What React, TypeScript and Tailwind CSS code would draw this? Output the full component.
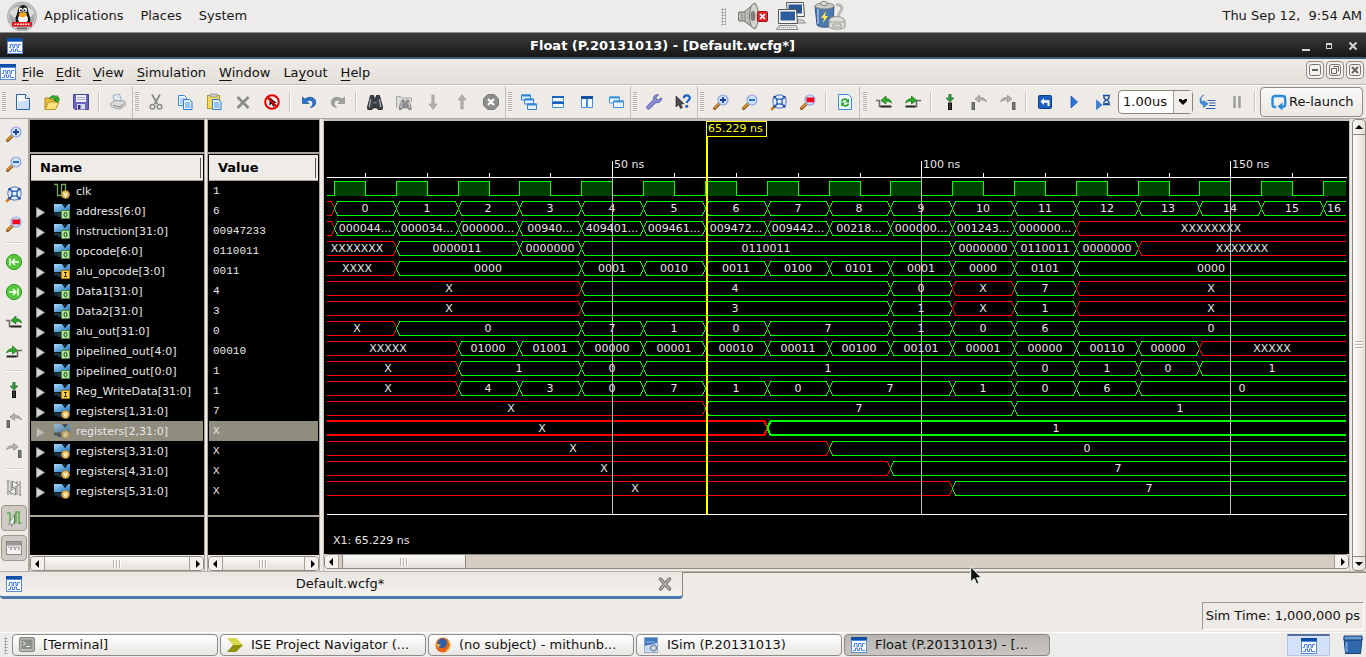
import React from "react";

/* ------------------------------------------------------------------ */
/* Icons                                                               */
/* ------------------------------------------------------------------ */

function Lens({ children }: { children?: React.ReactNode }) {
  return (
    <>
      <path d="M6.6 9.4 1.6 14.4" stroke="#8a4a0c" strokeWidth="3.2" strokeLinecap="round" />
      <path d="M6 9.6 1.6 14" stroke="#e39a3c" strokeWidth="1.6" strokeLinecap="round" />
      <circle cx="10" cy="6" r="5" fill="#cfe0fb" stroke="#8fa6dc" strokeWidth="1.2" />
      {children}
    </>
  );
}

const waves = (
  <>
    <rect x="0.5" y="0.5" width="15" height="15" fill="#fafcff" stroke="#5b8bd0" />
    <rect x="0" y="0" width="16" height="3" fill="#0f4fa8" />
    <path d="M0 3.500h16" stroke="#4d8ad8" />
    <path
      d="M2 9.500h1.500v-3h2.500v3h1.500v-3h2.500v3h1.500v-3h2.500M2 13.500h2.500v-2.500h2v2.500h2v-2.500h2v2.500h3.500"
      fill="none"
      stroke="#4a80e8"
      strokeWidth="1"
    />
  </>
);

const ICONS: Record<string, React.ReactNode> = {
  waves,
  new: (
    <>
      <path d="M1.500 0.500h9l4 4v11h-13z" fill="#f3f8ff" stroke="#2f5fa8" />
      <path d="M3 8 14 6v9H3z" fill="#c9def8" />
      <path d="M10.500 0.500v4h4" fill="#fff" stroke="#2f5fa8" />
    </>
  ),
  open: (
    <>
      <path d="M1 15V4h4l1.500 1.500H12V8" fill="#e8bf3a" stroke="#b48a1a" />
      <path d="M1 15.500 4.500 8H15l-3.500 7.500z" fill="#fbe27a" stroke="#b9921f" />
      <path d="M5.500 4.500C7 1 11 .8 13 3.500V1.500l2.500 3.800-2 3L10 6.300h1.800C10.500 3.800 8 3.300 5.500 4.500z" fill="#2eb52a" stroke="#14700f" strokeWidth=".7" />
    </>
  ),
  save: (
    <>
      <path d="M.5.5h15v15H2l-1.500-1.500z" fill="#6a63c0" stroke="#4a4498" />
      <rect x="3" y="1" width="10" height="7" fill="#eef0fb" />
      <path d="M4 3.500h8M4 5.500h8" stroke="#a9a9cf" />
      <rect x="4" y="10" width="8" height="5.500" fill="#d8d8ea" />
      <rect x="5" y="11" width="2.500" height="4" fill="#2f2a78" />
    </>
  ),
  print: (
    <>
      <path d="M3 1.500 9.500 0l2 7-7 2z" fill="#dce7f5" stroke="#9fb0c8" />
      <path d="M.500 9.500 5 6.500l9.500.500 1 4-5.500 4-8.500-2z" fill="#dcdcdc" stroke="#a3a3a3" />
      <path d="M3 11.500l7 1 4-3" fill="none" stroke="#8e8e8e" />
      <path d="M6 15l8-3" stroke="#b9b9b9" strokeWidth="1.500" />
    </>
  ),
  cut: (
    <g fill="none" stroke="#8b8b8b">
      <path d="M4 .5 9.500 10M12 .5 6.500 10" strokeWidth="1.800" />
      <circle cx="4.500" cy="12.700" r="2.300" strokeWidth="1.500" />
      <circle cx="11.500" cy="12.700" r="2.300" strokeWidth="1.500" />
    </g>
  ),
  copy: (
    <>
      <path d="M1.500 1.500h6l2 2v8h-8z" fill="#e8f3ff" stroke="#3a8ad6" />
      <path d="M3 5h5M3 7h5M3 9h3" stroke="#79b4ea" />
      <path d="M6.500 5.500h6l2.500 2.500v7.500H6.500z" fill="#e2f0ff" stroke="#2b7fd0" />
      <path d="M8 9h5M8 11h5.500M8 13h5.500" stroke="#4a98e0" />
    </>
  ),
  paste: (
    <>
      <rect x="1.500" y="1.500" width="12" height="13" fill="#f3d95e" stroke="#b59722" />
      <rect x="4" y="0" width="7" height="3" fill="#c9c9c9" stroke="#8b8b8b" strokeWidth=".6" />
      <path d="M6.500 5.500h6l2.500 2.500v7.500H6.500z" fill="#e2f0ff" stroke="#2b7fd0" />
      <path d="M8 9h5M8 11h5.500M8 13h5.500" stroke="#4a98e0" />
    </>
  ),
  delete: <path d="M2.500 3 13.500 14M13.500 3 2.500 14" stroke="#8c8c8c" strokeWidth="2.800" />,
  nocursor: (
    <>
      <circle cx="8" cy="8" r="6.800" fill="#f4eaea" stroke="#e60000" strokeWidth="2" />
      <path d="M5.500 3v8.500l2.200-1.800 1.500 3 1.800-.8-1.500-2.900h3z" fill="#111" />
      <path d="M3.200 3.200 12.800 12.800" stroke="#e60000" strokeWidth="2" />
    </>
  ),
  undo: <path d="M1.500 3v6.500H8L5.800 7.300C8.500 5 12 6.500 11.800 9.500c0 1.500-1 3-2.500 4 4-.5 5.700-3 5.400-5.800C14.200 3.500 8.500 1.500 4 5.200z" fill="#2a72c8" stroke="#154c94" strokeWidth=".7" />,
  redo: <path d="M14.500 3v6.500H8l2.200-2.200C7.500 5 4 6.500 4.200 9.500c0 1.500 1 3 2.500 4-4-.5-5.700-3-5.400-5.800C1.800 3.500 7.500 1.500 12 5.200z" fill="#a0a0a0" stroke="#8a8a8a" strokeWidth=".7" />,
  find: (
    <>
      <path d="M3.500 1.500h3l1 3v9.500h-1.500L5 15.500H.800L.5 13zM12.500 1.500h-3l-1 3v9.500h1.500l1 1.500h4.200l.300-2.500z" fill="#3b4146" stroke="#16191c" strokeWidth=".8" />
      <path d="M3.500 5 2.300 13M12.500 5l1.200 8" stroke="#a9b1b8" strokeWidth="1.300" />
      <path d="M6.500 7.500h3v2h-3z" fill="#6d757c" />
    </>
  ),
  findfiles: (
    <>
      <path d="M.5 14V2.500h4L6 4h9.500v4" fill="#dedcd9" stroke="#a5a5a5" />
      <path d="M6 6h2l.8 3V14H6l-.500 1.500H3L3.500 12zM12.500 6h-2l-.8 3V14h2.500l.5 1.500H15.300L14.800 12z" fill="#8f8f8f" stroke="#6f6f6f" strokeWidth=".6" />
      <path d="M5.800 8 4.800 14M12.700 8l1 6" stroke="#d6d6d6" />
    </>
  ),
  down: <path d="M6.800 1h2.400v9H12l-4 5.500L4 10h2.800z" fill="#b3b0ac" stroke="#9b9894" strokeWidth=".6" />,
  up: <path d="M6.800 15h2.400V6H12L8 .5 4 6h2.800z" fill="#b3b0ac" stroke="#9b9894" strokeWidth=".6" />,
  stop: (
    <>
      <path d="M4.800.5h6.400l4.300 4.300v6.400l-4.300 4.300H4.800L.5 11.200V4.800z" fill="#8d8d8d" stroke="#777" />
      <path d="M5 5l6 6M11 5l-6 6" stroke="#fff" strokeWidth="2.200" />
    </>
  ),
  cascade: (
    <g fill="#e6f3ff" stroke="#2f86d6">
      <path d="M.5 1h9v5h-9z" /><path d="M.5 1.500h9" strokeWidth="2" />
      <path d="M3.500 5h9v5h-9z" /><path d="M3.500 5.500h9" strokeWidth="2" />
      <path d="M6.500 10h9v5.500h-9z" /><path d="M6.500 10.500h9" strokeWidth="2" />
    </g>
  ),
  tileh: (
    <g fill="#f4faff" stroke="#3f92dc">
      <path d="M2.500 2.500h11v5h-11zM2.500 8.500h11v5h-11z" />
      <path d="M2 3h12M2 9h12" stroke="#1c62b8" strokeWidth="2" />
    </g>
  ),
  tilev: (
    <g fill="#f4faff" stroke="#3f92dc">
      <path d="M2.500 2.500h5v11h-5zM8.500 2.500h5v11h-5z" />
      <path d="M2 3.500h12" stroke="#1450a8" strokeWidth="3" />
    </g>
  ),
  float: (
    <g fill="#eaf5ff" stroke="#3f92dc">
      <path d="M1.500 3h10v6h-10z" /><path d="M1.500 3.500h10" strokeWidth="2" />
      <path d="M5.500 7h10v6.500h-10z" /><path d="M5.500 7.500h10" strokeWidth="2" />
    </g>
  ),
  wrench: (
    <path d="M15.300 3.800 12.500 6l-2-.6-.5-2L12.500.8C9.500 0 6.800 2.500 7.500 5.800L1 12.300c-1.300 1.500 1 3.800 2.500 2.500L10 8.500c3.300.8 6-1.700 5.300-4.700z" fill="#8a8cd8" stroke="#4c4f9e" strokeWidth=".9" />
  ),
  whatsthis: (
    <>
      <path d="M1 2v11l2.700-2.300L5.500 14.500l2-1L5.700 9.800h3.500z" fill="#4a4a4a" stroke="#222" strokeWidth=".6" />
      <path d="M8.800 4.200C9 .5 14.800.5 14.800 4c0 2.500-3 2.500-3 5" fill="none" stroke="#1461c4" strokeWidth="2.200" />
      <circle cx="11.800" cy="12.300" r="1.500" fill="#1461c4" />
    </>
  ),
  zoomin: <Lens><path d="M10 3v6M7 6h6" stroke="#1c3f9c" strokeWidth="1.800" /></Lens>,
  zoomout: <Lens><path d="M7 6h6" stroke="#1c63b8" strokeWidth="1.800" /></Lens>,
  zoomfit: (
    <>
      <path d="M4.500 11.500 1 15" stroke="#d58327" strokeWidth="3" strokeLinecap="round" />
      <circle cx="8.500" cy="7.500" r="6.700" fill="#e3edfc" stroke="#6c8ad2" strokeWidth="1.200" />
      <path d="M3 2.500 14 13M14 2.500 3 13" stroke="#2a5db0" strokeWidth="1.700" />
      <rect x="6" y="5.200" width="5" height="4.800" fill="#e8f1ff" stroke="#2a5db0" strokeWidth="1.300" />
      <path d="M2.500 2h3l-3 3zM14.500 2h-3l3 3zM2.500 13.500h3l-3-3zM14.500 13.500h-3l3-3z" fill="#1e4a9a" />
    </>
  ),
  zoomsel: <Lens><rect x="6.500" y="3.500" width="7.500" height="4.800" fill="#f5001d" /></Lens>,
  refresh: (
    <>
      <path d="M1.500.5h10l3 3v12h-13z" fill="#eef6ff" stroke="#3a8ad6" />
      <path d="M4.500 7.500C5.500 4.500 9 4.500 10.500 6.500M11.500 9.500c-1 3-4.500 3-6 1" fill="none" stroke="#27a527" strokeWidth="1.800" />
      <path d="M12 4.500v4H8zM4 12.500v-4h4z" fill="#27a527" />
    </>
  ),
  prevedge: (
    <>
      <path d="M0 6.500h3.500v6H15" fill="none" stroke="#6b6b66" strokeWidth="1.600" />
      <path d="M4.500 12.500h11" stroke="#1f1f1f" strokeWidth="1.800" />
      <path d="M5 6.500 10 2v2.700c3 0 5 1 5.500 4.300-1.700-1.700-3.200-1.800-5.500-1.800V10z" fill="#2faa2c" stroke="#126b10" strokeWidth=".7" />
    </>
  ),
  nextedge: (
    <>
      <path d="M1 12.500h10.500v-6H16" fill="none" stroke="#6b6b66" strokeWidth="1.600" />
      <path d="M.5 12.500h10" stroke="#1f1f1f" strokeWidth="1.800" />
      <path d="M11.500 6.500 6.500 2v2.700C3.500 4.700 1.500 5.700.5 9c1.700-1.700 3.700-1.800 6-1.800V10z" fill="#2faa2c" stroke="#126b10" strokeWidth=".7" />
    </>
  ),
  addmarker: (
    <>
      <path d="M6.800.5h2.400V4H12L8 8 4 4h2.800z" fill="#2f9a3e" stroke="#156424" strokeWidth=".6" />
      <rect x="6.500" y="9" width="3" height="6.500" fill="#3c3c3c" stroke="#111" />
    </>
  ),
  prevmarker: (
    <>
      <path d="M4 5 8.500 1.200v2.300c3.500 0 6 1 7 4.300-2-1.800-4.200-2-7-2v2.500z" fill="#b4b2af" stroke="#8a8885" strokeWidth=".7" />
      <rect x="1" y="8.500" width="2.500" height="7" fill="#777" stroke="#606060" />
    </>
  ),
  nextmarker: (
    <>
      <path d="M12 5 7.500 1.200v2.300c-3.500 0-6 1-7 4.300 2-1.800 4.200-2 7-2v2.500z" fill="#b4b2af" stroke="#8a8885" strokeWidth=".7" />
      <rect x="12.500" y="8.500" width="2.500" height="7" fill="#777" stroke="#606060" />
    </>
  ),
  restart: (
    <>
      <rect x="1.500" y="1.500" width="13" height="13" rx="1" fill="#1c5fc0" stroke="#0f3f8c" />
      <path d="M3.500 7.500 7 4v2.300h5.500V12h-2V8.700H7V11z" fill="#fff" />
    </>
  ),
  run: <path d="M5 2 11.500 8 5 14z" fill="#2d74d2" stroke="#1e59b0" strokeWidth=".8" />,
  runtime: (
    <>
      <path d="M1.500 6 7 11 1.500 15.500z" fill="#3d82d8" stroke="#2a66b8" strokeWidth=".6" />
      <path d="M8 1.500h7M8 10.500h7M9 2v2l2 2-2 2v2.500M14 2v2l-2 2 2 2v2.500" fill="none" stroke="#16509c" strokeWidth="1.400" />
      <path d="M10 9.500h3" stroke="#16509c" />
    </>
  ),
  step: (
    <>
      <path d="M4 1C0 3 0 7 3.500 8.500V6.500L8 9.800 3.500 13.500v-2.300C-1.500 9.500-1 3 4 1z" fill="#3f8fe0" stroke="#1f62b0" strokeWidth=".6" />
      <path d="M7.500 6.500h8M9 9h6.500M9 11.500h6.500M6 14.500h9.500" stroke="#2762b4" strokeWidth="1.200" />
    </>
  ),
  pause: <path d="M5.500 2v12M10.500 2v12" stroke="#9b9b9b" strokeWidth="2.400" />,
  relaunch: (
    <>
      <path d="M5 13H4c-2 0-2.500-1-2.500-2.500V5c0-1.800 1-3 2.500-3h7.500c1.800 0 2.700 1.200 2.700 3v5c0 1.500-1 2.700-2.700 2.700H10" fill="none" stroke="#2a8bdc" strokeWidth="2.400" />
      <path d="M11.500 8.500v8L6.500 12.600z" fill="#2a8bdc" />
    </>
  ),
  gofirst: (
    <>
      <circle cx="8" cy="8" r="7.600" fill="#55c83c" stroke="#2c9a1c" />
      <path d="M4 4.500v7M13 8H6.500M9 5 6 8l3 3" fill="none" stroke="#fff" strokeWidth="1.500" />
    </>
  ),
  golast: (
    <>
      <circle cx="8" cy="8" r="7.600" fill="#55c83c" stroke="#2c9a1c" />
      <path d="M12 4.500v7M3 8h6.500M7 5l3 3-3 3" fill="none" stroke="#fff" strokeWidth="1.500" />
    </>
  ),
  swap: (
    <g stroke="#8d8b88">
      <path d="M2 1v14M5 1v14M11 1v14M14 1v14M.5 1h3M12.500 15h3" strokeWidth="1.200" />
      <path d="M6.500 1 13 5 6.500 8zM9.500 8v7L3 11.500z" fill="#f4f2ef" />
    </g>
  ),
  snap: (
    <>
      <path d="M1 3h3v10M10 13V2h3v11h2.500" fill="none" stroke="#5aa84e" strokeWidth="1.500" />
      <path d="M8.500 5 2.500 14.500l2.800-1 .2 3 3-6z" fill="#fff" stroke="#777" strokeWidth=".7" />
      <path d="M8.500 4v10" stroke="#4f7a4a" />
    </>
  ),
  panels: (
    <>
      <rect x=".5" y="1.500" width="15" height="13" fill="#f4f3f1" stroke="#8c8a87" />
      <rect x="1" y="2" width="14" height="3.500" fill="#9b9996" />
      <path d="M2 7h3v3M6 7h3v3M10 7h3v3M5 7v3M9 7v3M13 7v3" fill="none" stroke="#9b9996" />
    </>
  ),
  terminal: (
    <>
      <rect x=".5" y=".5" width="15" height="14" rx="1.500" fill="#b9bab6" stroke="#83857f" />
      <rect x="2.500" y="2.500" width="11" height="9.500" fill="#8b8f89" />
      <path d="M4 4.500 6.500 6.500 4 8.500M7 9.500h4" fill="none" stroke="#f2f4f0" />
    </>
  ),
  navigator: (
    <>
      <path d="M0 1h9l7 7H6z" fill="#d5d94c" />
      <path d="M6 8h10l-7 7H0z" fill="#8d9008" />
    </>
  ),
  firefox: (
    <>
      <circle cx="8" cy="8" r="7.500" fill="#e8731a" />
      <circle cx="7.500" cy="6.500" r="5" fill="#2d5fa8" />
      <path d="M1 4C1 13 8 12.500 11 9c1.500-2 1-4 .5-5.500 2 1.500 4 3 3.500 6C13.500 17 2 17 .800 9.500z" fill="#e5661a" />
      <path d="M1 5c1 3 3 2 5 3-1 1-2 2-4 1.500z" fill="#f9c23c" />
      <path d="M13.500 4C16 7 15.500 12 11 14" fill="none" stroke="#fbc73d" strokeWidth="1.200" />
    </>
  ),
  isim: (
    <>
      <rect x="1.500" y=".5" width="13" height="15" fill="#dbe8f8" stroke="#8da9cc" />
      <path d="M2 1h12v5L2 9z" fill="#3f78bd" />
      <path d="M3 5h9M3 11h5M3 13h4" stroke="#9dc0e8" />
      <circle cx="10.500" cy="11" r="3.200" fill="#b8c3cf" stroke="#66788c" />
      <circle cx="10.500" cy="11" r="1.100" fill="#f5f5f5" />
    </>
  ),
};

function Icon({ name }: { name: string }) {
  return (
    <svg viewBox="0 0 16 16" className="size-4 shrink-0 overflow-visible" fill="none" aria-hidden="true">
      {ICONS[name]}
    </svg>
  );
}

function BusIcon({ badge, dim }: { badge: string; dim?: boolean }) {
  return (
    <svg viewBox="0 0 16 16" className={dim ? "size-4 opacity-60" : "size-4"} fill="none" aria-hidden="true">
      <defs>
        <linearGradient id="busFill" x1="0" y1="0" x2="1" y2="1">
          <stop offset="0" stopColor="#a9dcff" />
          <stop offset="1" stopColor="#1b6db8" />
        </linearGradient>
      </defs>
      {badge === "clk" ? (
        <path d="M0 1.500h3.500v11H7.500V1.500h4V8" stroke="#76a862" strokeWidth="1.300" />
      ) : (
        <>
          <path d="M0 1h8l3 4 3-4h2v8H0z" fill="url(#busFill)" />
          <path d="M8 1h6l-3 4z" fill="#12222f" />
          <path d="M0 9.500h7l1.500 3L7 14H4l-1-1.500H0z" fill="#1d3440" />
        </>
      )}
      {badge === "O" && (
        <>
          <rect x="7.500" y="7.500" width="8" height="8" fill="#b4e8a0" stroke="#4b8a3a" />
          <ellipse cx="11.500" cy="11.500" rx="1.500" ry="2.200" stroke="#173d10" />
        </>
      )}
      {badge === "I" && (
        <>
          <rect x="7.500" y="7.500" width="8" height="8" fill="#ffcf4a" stroke="#a9780d" />
          <path d="M10 9.500h3M11.500 9.500v4M10 13.500h3" stroke="#3a2a00" />
        </>
      )}
      {(badge === "V" || badge === "clk") && (
        <>
          <circle cx="11.500" cy="11.500" r="4" fill="#f0b945" stroke="#8f7f52" />
          <path d="M9.800 9.500 11.500 13.500l1.700-4" stroke="#fff8e0" strokeWidth="1.200" />
        </>
      )}
    </svg>
  );
}

/* ------------------------------------------------------------------ */
/* Signals                                                             */
/* ------------------------------------------------------------------ */

type Signal = {
  name: string;
  value: string;
  badge: string;
  /* [edge index, label] pairs; START is before the first edge */
  wave: [number, string][];
  selected?: boolean;
};

const START = -1;

const each = (from: number, labels: string): [number, string][] =>
  labels.split(" ").map((l, i) => [from + i, l] as [number, string]);

const SIGNALS: Signal[] = [
  { name: "clk", value: "1", badge: "clk", wave: [] },
  { name: "address[6:0]", value: "6", badge: "O", wave: [[START, ""], ...each(0, "0 1 2 3 4 5 6 7 8 9 10 11 12 13 14 15 16")] },
  {
    name: "instruction[31:0]", value: "00947233", badge: "O",
    wave: [[START, ""], ...each(0, "000044... 000034... 000000... 00940... 409401... 009461... 009472... 009442... 00218... 000000... 001243... 000000... XXXXXXXX")],
  },
  { name: "opcode[6:0]", value: "0110011", badge: "O", wave: [[START, "XXXXXXX"], [1, "0000011"], [3, "0000000"], [4, "0110011"], ...each(10, "0000000 0110011 0000000 XXXXXXX")] },
  { name: "alu_opcode[3:0]", value: "0011", badge: "I", wave: [[START, "XXXX"], [1, "0000"], ...each(4, "0001 0010 0011 0100 0101 0001 0000 0101 0000")] },
  { name: "Data1[31:0]", value: "4", badge: "O", wave: [[START, "X"], [4, "4"], ...each(9, "0 X 7 X")] },
  { name: "Data2[31:0]", value: "3", badge: "O", wave: [[START, "X"], [4, "3"], ...each(9, "1 X 1 X")] },
  { name: "alu_out[31:0]", value: "0", badge: "O", wave: [[START, "X"], [1, "0"], ...each(4, "7 1 0 7"), ...each(9, "1 0 6 0")] },
  { name: "pipelined_out[4:0]", value: "00010", badge: "O", wave: [[START, "XXXXX"], ...each(2, "01000 01001 00000 00001 00010 00011 00100 00101 00001 00000 00110 00000 XXXXX")] },
  { name: "pipelined_out[0:0]", value: "1", badge: "O", wave: [[START, "X"], [2, "1"], ...each(4, "0 1"), ...each(11, "0 1 0 1")] },
  { name: "Reg_WriteData[31:0]", value: "1", badge: "I", wave: [[START, "X"], ...each(2, "4 3 0 7 1 0 7"), ...each(10, "1 0 6 0")] },
  { name: "registers[1,31:0]", value: "7", badge: "V", wave: [[START, "X"], [6, "7"], [11, "1"]] },
  { name: "registers[2,31:0]", value: "X", badge: "V", wave: [[START, "X"], [7, "1"]], selected: true },
  { name: "registers[3,31:0]", value: "X", badge: "V", wave: [[START, "X"], [8, "0"]] },
  { name: "registers[4,31:0]", value: "X", badge: "V", wave: [[START, "X"], [9, "7"]] },
  { name: "registers[5,31:0]", value: "X", badge: "V", wave: [[START, "X"], [10, "7"]] },
];

const LEFT = 3;
const RIGHT = 1022;
const rise = (k: number) => Math.floor(10.6 + 61.8 * k);
const fall = (k: number) => Math.floor(41.6 + 61.8 * k);
const range = (n: number) => Array.from({ length: n }, (_, i) => i);
const GREEN = "#00ff00";
const RED = "#ff0000";

function BusWave({ signal, top }: { signal: Signal; top: number }) {
  const y1 = signal.selected ? top : top + 0.5;
  const y2 = y1 + 14;
  const mid = y1 + 7;
  return (
    <g fill="none" strokeWidth={signal.selected ? 2 : 1}>
      {signal.wave.map(([start, label], i) => {
        const next = signal.wave[i + 1];
        const open = start === START;
        const a = open ? LEFT : rise(start) + 0.5;
        const b = next ? rise(next[0]) + 0.5 : RIGHT;
        const color = open || label.startsWith("X") ? RED : GREEN;
        const head = open ? `M${a} ${y1}` : `M${a} ${mid}L${a + 3} ${y1}`;
        const turn = next ? `H${b - 3}L${b} ${mid}L${b - 3} ${y2}` : `H${b}M${b} ${y2}`;
        const tail = open ? `H${a}` : `H${a + 3}L${a} ${mid}`;
        return <path key={start} d={head + turn + tail} stroke={color} />;
      })}
    </g>
  );
}

function WaveLabels({ signal, top }: { signal: Signal; top: number }) {
  return (
    <>
      {signal.wave.map(([start, label], i) => {
        const next = signal.wave[i + 1];
        const a = start === START ? -6 : rise(start);
        const b = next ? rise(next[0]) : RIGHT;
        return label ? (
          <text key={start} x={Math.floor((a + b) / 2)} y={top + 11} textAnchor="middle">
            {label}
          </text>
        ) : null;
      })}
    </>
  );
}

function WaveCanvas() {
  const clock =
    `M${LEFT} 74.5` +
    range(17)
      .map((k) => `H${rise(k) + 0.5}V60.5H${k === 16 ? RIGHT : fall(k) + 0.5}${k === 16 ? "" : "V74.5"}`)
      .join("");
  return (
    <svg width="1025" height="433" className="block shrink-0 text-[11px]" fill="#e6e6e6" role="img" aria-label="Waveforms">
      <g shapeRendering="crispEdges">
        {range(17).map((k) => (
          <rect key={k} x={rise(k)} y="60" width={(k === 16 ? RIGHT : fall(k)) - rise(k)} height="15" fill="#004000" />
        ))}
        <path d={clock} fill="none" stroke={GREEN} />
        {SIGNALS.slice(1).map((s, i) => (
          <BusWave key={s.name} signal={s} top={80 + 20 * i} />
        ))}
        <path d={`M${LEFT} 56.5H1023M${LEFT} 393.5H1023`} stroke="#fff" />
        <path d={range(16).filter((k) => k % 5 !== 4).map((k) => `M${fall(k) + 0.5} 52V56`).join("")} stroke="#fff" />
      </g>
      {SIGNALS.slice(1).map((s, i) => (
        <WaveLabels key={s.name} signal={s} top={80 + 20 * i} />
      ))}
      <g shapeRendering="crispEdges">
        <path d="M288.500 57V394M597.500 57V394M906.500 57V394" stroke="#c0c0c0" />
        <path d="M288.500 40V57M597.500 40V57M906.500 40V57" stroke="#fff" />
        <rect x="382" y="0" width="2" height="394" fill="#ffff00" />
        <rect x="382.500" y="0.500" width="60" height="15" fill="#000" stroke="#ffff00" />
      </g>
      <text x="384" y="11" fill="#ffff00">65.229 ns</text>
      <text x="290" y="47">50 ns</text>
      <text x="599" y="47">100 ns</text>
      <text x="908" y="47">150 ns</text>
      <text x="9" y="423">X1: 65.229 ns</text>
    </svg>
  );
}

/* ------------------------------------------------------------------ */
/* Small widgets                                                       */
/* ------------------------------------------------------------------ */

function ToolButton({ icon, label }: { icon: string; label: string }) {
  return (
    <button type="button" aria-label={label} className="flex h-8 w-[29px] shrink-0 items-center justify-center">
      <Icon name={icon} />
    </button>
  );
}

function ToolSeparator() {
  return (
    <div className="flex h-5 w-2 shrink-0 justify-center">
      <div className="h-full w-px bg-[#c9c5be]" />
      <div className="h-full w-px bg-white" />
    </div>
  );
}

function ToolGroup({ children, last }: { children: React.ReactNode; last?: boolean }) {
  return (
    <div className={last ? "flex h-full grow items-center" : "flex h-full shrink-0 items-center border-r border-[#c2bdb5]"}>
      <div className={last ? "flex w-[9px] shrink-0 justify-center" : "flex w-2 shrink-0 justify-center"}>
        <div className="h-5 w-1 bg-[repeating-linear-gradient(#b3aea6_0_1px,#f8f6f3_1px_2px)]" />
      </div>
      {children}
    </div>
  );
}

const isSep = (s: string) => s === "|";

function Tools({ items }: { items: string[] }) {
  return (
    <>
      {items.map((item, i) => {
        if (isSep(item)) return <ToolSeparator key={i} />;
        const [icon, label] = item.split("/");
        return <ToolButton key={i} icon={icon} label={label} />;
      })}
    </>
  );
}

function Arrow({ dir }: { dir: "left" | "right" | "up" | "down" }) {
  const d = { left: "M6 1v8L2 5z", right: "M4 1v8l4-4z", up: "M1 7h8L5 3z", down: "M1 3h8L5 7z" }[dir];
  return (
    <svg viewBox="0 0 10 10" className="size-[10px]" aria-hidden="true">
      <path d={d} fill="#000" />
    </svg>
  );
}

function Grip() {
  return <span className="h-2 w-[9px] bg-[repeating-linear-gradient(90deg,#b9b3aa_0_1px,#fff_1px_2px,transparent_2px_3px)]" />;
}

function HScroll({ label, thumb, start }: { label: string; thumb: string; start?: string }) {
  return (
    <div className="flex h-[15px] shrink-0 overflow-hidden rounded-sm border border-[#8d877e] bg-[#d6cdc3]" aria-label={label} role="group">
      <button type="button" aria-label="Scroll left" className="flex w-[14px] shrink-0 items-center justify-center border-r border-[#a39d94] bg-[#f3f0ed]">
        <Arrow dir="left" />
      </button>
      <div className={start}>
        <div className={thumb}>
          <Grip />
        </div>
      </div>
      <button type="button" aria-label="Scroll right" className="flex w-[14px] shrink-0 items-center justify-center border-l border-[#a39d94] bg-[#f3f0ed]">
        <Arrow dir="right" />
      </button>
    </div>
  );
}

const THUMB = "flex h-full w-full items-center justify-center bg-linear-to-b from-[#fbfaf8] to-[#e4dfd9]";

function ColumnPane({ title, name, children }: { title: string; name: string; children: React.ReactNode }) {
  return (
    <>
      <div className="h-8 bg-black" />
      <div className="h-[2px] bg-[#aca59c]" />
      <div className="bg-black px-px pt-px">
        <table className="w-full border-separate border-spacing-0 text-[11px] text-[#e8e8e8]" aria-label={name}>
          <thead>
            <tr>
              <th className="h-[26px] border-b border-[#a39d94] bg-[#efece8] py-0 pr-[2px] pl-[9px] text-left text-[13px] leading-5 font-bold text-black">
                <div className="border-r border-[#55524d]">{title}</div>
              </th>
            </tr>
          </thead>
          <tbody>{children}</tbody>
        </table>
      </div>
      <div className="h-[14px] grow bg-black" />
      <div className="h-[2px] bg-[#aca59c]" />
      <div className="h-[38px] bg-black" />
      <div className="h-px bg-[#efece8]" />
    </>
  );
}

const MENUS: [string, string, string, string][] = [
  ["", "F", "ile", "mr-[12px]"],
  ["", "E", "dit", "mr-[12px]"],
  ["", "V", "iew", "mr-[13px]"],
  ["", "S", "imulation", "mr-[13px]"],
  ["", "W", "indow", "mr-[13px]"],
  ["La", "y", "out", "mr-[13px]"],
  ["", "H", "elp", ""],
];

const SIDE = [
  "zoomin/Zoom In", "zoomout/Zoom Out", "zoomfit/Zoom to Full View", "zoomsel/Zoom to Cursor", "|",
  "gofirst/Go to Time 0", "golast/Go to Latest Time", "prevedge/Previous Transition", "nextedge/Next Transition", "|",
  "addmarker/Add Marker", "prevmarker/Previous Marker", "nextmarker/Next Marker", "|",
  "swap/Swap Cursors", "snap/Snap to Transition", "panels/Floating Ruler",
];

const TASKS: [string, string][] = [
  ["terminal", "[Terminal]"],
  ["navigator", "ISE Project Navigator (..."],
  ["firefox", "(no subject) - mithunb..."],
  ["isim", "ISim (P.20131013)"],
  ["waves", "Float (P.20131013) - [..."],
];

/* ------------------------------------------------------------------ */
/* Page sections                                                       */
/* ------------------------------------------------------------------ */

function DesktopPanel() {
  return (
    <header className="flex h-8 shrink-0 items-center bg-[#edecea] pl-[7px] pr-1 text-[#1a1a1a]">
      <svg viewBox="0 0 30 30" className="size-[30px]" aria-hidden="true">
        <circle cx="15" cy="15.500" r="14.500" fill="#c9c9c9" stroke="#a9a9a9" />
        <circle cx="15" cy="15.500" r="12.500" fill="#a7a8aa" />
        <path d="M3 12C6 3 24 3 27 12L24 16H6z" fill="#dcdcdc" />
        <path d="M9 21c-1-6 1-7 1.500-10C11 3 20 2 21 9c.300 4 3 7 2 12z" fill="#151515" />
        <ellipse cx="16" cy="18" rx="5" ry="5" fill="#f4f4f4" />
        <ellipse cx="13.700" cy="9" rx="2" ry="2.500" fill="#fff" />
        <ellipse cx="18" cy="9" rx="2" ry="2.500" fill="#fff" />
        <circle cx="14" cy="9.500" r=".9" />
        <circle cx="17.600" cy="9.500" r=".9" />
        <path d="M11.500 13.500c2-3 6-3 8.500-.5-1 4-7 5-8.500.5z" fill="#f6a51c" />
        <rect x="5" y="21" width="20" height="4.500" fill="#e3131b" />
        <path d="M7.500 23.300h15" stroke="#fff" strokeWidth="1.600" strokeDasharray="1.800 .9" />
        <path d="M10 27.500h10" stroke="#6c6c6c" strokeWidth="1.500" />
      </svg>
      <nav className="flex gap-[17px] pl-[7px]">
        <a href="#applications">Applications</a>
        <a href="#places">Places</a>
        <a href="#system">System</a>
      </nav>
      <div className="ml-[474px] flex items-center gap-2">
        <span className="mr-1 h-[17px] w-[5px] bg-[radial-gradient(#8f8f8f_35%,transparent_60%)] bg-size-[3px_3px]" />
        <svg viewBox="0 0 30 28" className="h-7 w-[30px]" aria-hidden="true">
          <path d="M1 10h5L17 1c3 4 3 22 0 26L6 19H1c-1-2-1-7 0-9z" fill="#bdbdb8" stroke="#6f6f6a" />
          <ellipse cx="16" cy="14" rx="4.500" ry="12.500" fill="#d4d4cf" stroke="#7a7a75" />
          <ellipse cx="15" cy="14" rx="2.500" ry="5" fill="#80807b" />
          <path d="M4 10v9M7 9v11" stroke="#8b8b86" />
          <rect x="19.500" y="9.500" width="10" height="10" rx="1" fill="#e0262c" stroke="#a30d12" />
          <path d="m22 12 5 5m0-5-5 5" stroke="#fff" strokeWidth="1.600" />
        </svg>
        <svg viewBox="0 0 30 28" className="h-7 w-[30px]" aria-hidden="true">
          <path d="M10.500.500h17l1 14h-17z" fill="#f2f2ef" stroke="#555" />
          <path d="M12.500 2.500H26v9H12.500z" fill="#2c5596" />
          <path d="M15 18h12l2.500 3H16z" fill="#ddd" stroke="#888" />
          <path d="M2.500 7.500h18l1 14h-19z" fill="#f2f2ef" stroke="#555" />
          <path d="M4.500 9.500H19v9H4.500z" fill="#2c5c9e" />
          <path d="M3 23.500h17l2 4H.500z" fill="#e6e6e2" stroke="#888" />
          <path d="M3 25.500h16" stroke="#9a9a96" strokeDasharray="1 1" />
        </svg>
        <svg viewBox="0 0 32 30" className="h-[30px] w-8" aria-hidden="true">
          <path d="M20 24c6 0 3-10 6-13 4-4 1-8-4-7" fill="none" stroke="#b9bab5" strokeWidth="3" />
          <path d="M1 5h19l-1 19c-4 3-13 3-16 0z" fill="#4c78ad" stroke="#35587f" />
          <ellipse cx="10.500" cy="5" rx="9.500" ry="3" fill="#c9cbc8" stroke="#84867f" />
          <rect x="7" y="0.500" width="6" height="4" rx="1.500" fill="#dcdcd9" stroke="#85857f" />
          <path d="M4 8v15" stroke="#89addb" strokeWidth="2" />
          <path d="m12 10-5 7h3l-1 5 5-7h-3z" fill="#fce94f" />
          <path d="M15 20c0-6 15-6 16 0v6c-3 3-12 3-16 0z" fill="#dededb" stroke="#8f908a" />
          <path d="M19 23h8v3h-8zM15 21h16" fill="none" stroke="#9d9e98" />
        </svg>
      </div>
      <time className="ml-auto whitespace-pre">Thu Sep 12,  9:54 AM</time>
    </header>
  );
}

function TitleBar() {
  return (
    <div className="flex h-[27px] shrink-0 items-center border-t border-b-2 border-t-[#8e8c89] border-b-[#3c5676] bg-linear-to-b from-[#3a3a3a] via-[#2b2b2b] to-[#161616] pt-[2px] pr-2 pl-[7px]">
      <Icon name="waves" />
      <h1 className="grow text-center font-bold text-white">Float (P.20131013) - [Default.wcfg*]</h1>
      <div className="flex items-center gap-4">
        <button type="button" aria-label="Minimize window" className="flex h-3 w-2 items-end"><span className="mb-px h-[2px] w-full bg-[#d6d6d6]" /></button>
        <button type="button" aria-label="Maximize window" className="h-[6px] w-[6px] border border-t-2 border-[#d6d6d6]" />
        <button type="button" aria-label="Close window" className="size-[10px]">
          <svg viewBox="0 0 10 10" aria-hidden="true"><path d="m1.500 1.500 7 7m0-7-7 7" stroke="#d6d6d6" strokeWidth="2" /></svg>
        </button>
      </div>
    </div>
  );
}

function MenuBar() {
  const mdi: [string, string][] = [
    ["Minimize document", "M6 9h6"],
    ["Restore document", "M7.500 5.500h5v5M5.500 7.500h5v5h-5z"],
    ["Close document", "m6 6 6 6m0-6-6 6"],
  ];
  return (
    <div className="flex h-[26px] shrink-0 items-center border-b border-[#c2beb6] bg-linear-to-b from-[#eeebe7] to-[#e3e0da] pr-[2px]">
      <Icon name="waves" />
      <nav className="flex grow pt-[2px] pl-[6px]">
        {MENUS.map(([pre, key, post, gap]) => (
          <a key={key} href={"#" + pre + key + post} className={gap}>
            {pre}<span className="underline underline-offset-[3px]">{key}</span>{post}
          </a>
        ))}
      </nav>
      <div className="flex gap-[2px] self-start pt-[2px]">
        {mdi.map(([label, d]) => (
          <button key={label} type="button" aria-label={label} className="size-[18px] rounded-sm border border-[#8f8a82] bg-[#f4f2ef]">
            <svg viewBox="1 1 16 16" className="size-4" fill="none" aria-hidden="true">
              <rect x="3.500" y="3.500" width="11" height="11" rx="2" stroke="#77736d" />
              <path d={d} stroke="#66625d" strokeWidth={label.startsWith("Restore") ? 1 : 2} />
            </svg>
          </button>
        ))}
      </div>
    </div>
  );
}

function ToolBar() {
  return (
    <div className="flex h-[34px] shrink-0 items-center overflow-hidden border-t border-b border-t-white border-b-[#aea9a0] bg-[#eeebe7]">
      <ToolGroup><Tools items={["new/New", "open/Open", "save/Save", "|", "print/Print"]} /></ToolGroup>
      <ToolGroup>
        <Tools items={["cut/Cut", "copy/Copy", "paste/Paste", "delete/Delete", "nocursor/Cancel", "|", "undo/Undo", "redo/Redo", "|", "find/Find", "findfiles/Find in Files", "down/Find Next", "up/Find Previous", "stop/Stop Search"]} />
      </ToolGroup>
      <ToolGroup><Tools items={["cascade/Cascade", "tileh/Tile Horizontally", "tilev/Tile Vertically", "float/Float"]} /></ToolGroup>
      <ToolGroup><Tools items={["wrench/Preferences", "whatsthis/What's This"]} /></ToolGroup>
      <ToolGroup><Tools items={["zoomin/Zoom In", "zoomout/Zoom Out", "zoomfit/Zoom to Full View", "zoomsel/Zoom to Cursor", "|", "refresh/Refresh"]} /></ToolGroup>
      <ToolGroup last>
        <Tools items={["prevedge/Previous Transition", "nextedge/Next Transition", "|", "addmarker/Add Marker", "prevmarker/Previous Marker", "nextmarker/Next Marker", "|", "restart/Restart", "run/Run All", "runtime/Run for Time"]} />
        <div className="relative ml-px h-6 w-[75px] shrink-0">
          <select aria-label="Run time" defaultValue="1.00us" className="size-full appearance-none rounded-sm border border-[#8a857c] bg-white pl-1 text-[13px]">
            <option>1.00us</option>
          </select>
          <span className="pointer-events-none absolute inset-y-px right-px flex w-[19px] items-center justify-center border-l border-[#a39d94] bg-[#f1eeea]">
            <svg viewBox="0 0 8 6" className="h-[6px] w-2" aria-hidden="true"><path d="M0 0h2l2 1.500L6 0h2v2L4 6 0 2z" /></svg>
          </span>
        </div>
        <Tools items={["step/Step", "pause/Break", "|"]} />
        <button type="button" className="ml-px flex h-[30px] w-[103px] shrink-0 items-center gap-[2px] rounded border border-[#8f8a82] bg-linear-to-b from-[#fbfaf8] to-[#ebe7e2] pl-[10px]">
          <Icon name="relaunch" />
          <span className="whitespace-nowrap">Re-launch</span>
        </button>
      </ToolGroup>
    </div>
  );
}

function SideBar() {
  return (
    <div className="flex w-7 shrink-0 flex-col">
      {SIDE.map((item, i) => {
        if (isSep(item))
          return (
            <div key={i} className="mx-[6px] flex h-2 flex-col justify-center">
              <div className="h-px bg-[#d4d0ca]" />
              <div className="h-px bg-white" />
            </div>
          );
        const [icon, label] = item.split("/");
        const pressed = i >= SIDE.length - 2;
        return (
          <div key={i} className="flex h-[30px] items-center justify-center">
            <button
              type="button"
              aria-label={label}
              className={pressed ? "flex size-[26px] items-center justify-center rounded-sm border border-[#9d978e] bg-[#cfcac3]" : "flex size-[26px] items-center justify-center"}
            >
              <Icon name={icon} />
            </button>
          </div>
        );
      })}
    </div>
  );
}

function Workspace() {
  return (
    <main className="flex shrink-0 bg-[#eeebe7]">
      <SideBar />
      <section className="flex w-[177px] shrink-0 flex-col border-t border-r border-l-2 border-[#aca59c]">
        <ColumnPane title="Name" name="Signal names">
          {SIGNALS.map((s) => (
            <tr key={s.name} className={s.selected ? "bg-[#908c7e]" : ""}>
              <td className="p-0">
                <div className="flex h-5 items-center pl-[5px]">
                  <span className="flex w-[18px]">
                    {s.badge !== "clk" && (
                      <svg viewBox="0 0 9 11" className={s.selected ? "mt-[3px] h-[11px] w-[9px] opacity-70" : "mt-[3px] h-[11px] w-[9px]"} aria-hidden="true">
                        <path d="M.5.5v10l8-5z" fill="#d4d4d4" stroke="#a0a0a0" strokeWidth=".8" />
                      </svg>
                    )}
                  </span>
                  <BusIcon badge={s.badge} dim={s.selected} />
                  <span className="pt-[2px] pl-[6px] whitespace-nowrap">{s.name}</span>
                </div>
              </td>
            </tr>
          ))}
        </ColumnPane>
        <HScroll label="Name scroll bar" start="grow" thumb={THUMB} />
      </section>
      <section className="ml-[2px] flex w-[113px] shrink-0 flex-col border-x border-t border-[#aca59c]">
        <ColumnPane title="Value" name="Signal values">
          {SIGNALS.map((s) => (
            <tr key={s.name} className={s.selected ? "bg-[#908c7e]" : ""}>
              <td className="h-5 py-0 pr-0 pl-1 font-['Liberation_Mono',monospace] leading-5">{s.value}</td>
            </tr>
          ))}
        </ColumnPane>
        <HScroll label="Value scroll bar" start="grow" thumb={THUMB} />
      </section>
      <section className="ml-[3px] flex min-w-0 grow flex-col border-x border-t-2 border-[#c6c1ba]">
        <div className="flex grow overflow-hidden bg-black">
          <WaveCanvas />
        </div>
        <HScroll label="Waveform scroll bar" start="grow pl-[3px]" thumb="flex h-full w-[124px] items-center justify-center border-x border-[#8d877e] bg-linear-to-b from-[#fbfaf8] to-[#e4dfd9]" />
        <div className="h-[2px] bg-[#eeebe7]" />
      </section>
      <div className="ml-[2px] flex w-[14px] shrink-0 flex-col overflow-hidden rounded-sm border border-[#8d877e] bg-linear-to-r from-[#fbfaf8] to-[#e4dfd9]">
        <button type="button" aria-label="Scroll up" className="flex h-[15px] items-center justify-center border-b border-[#8d877e]"><Arrow dir="up" /></button>
        <div className="flex grow items-center justify-center">
          <span className="h-[9px] w-2 bg-[repeating-linear-gradient(#b9b3aa_0_1px,#fff_1px_2px,transparent_2px_3px)]" />
        </div>
        <button type="button" aria-label="Scroll down" className="flex h-[14px] items-center justify-center border-t border-[#8d877e]"><Arrow dir="down" /></button>
      </div>
    </main>
  );
}

function DocumentTabs() {
  return (
    <div className="flex h-7 shrink-0 border-t border-[#b5b0a8] bg-[#eeebe7]">
      <div className="flex w-1/2 items-center rounded-b-sm border-r border-b-[3px] border-r-[#8d877e] border-b-[#4a7aab] bg-linear-to-b from-[#e9e5e1] to-[#f4f1ee] pr-[10px] pl-[6px]">
        <Icon name="waves" />
        <button type="button" className="grow text-center">Default.wcfg*</button>
        <button type="button" aria-label="Close tab" className="size-[14px]">
          <svg viewBox="0 0 14 14" fill="none" aria-hidden="true">
            <path d="m2.500 2 9 10m0-10-9 10" stroke="#73736b" strokeWidth="3.400" strokeLinecap="round" />
            <path d="m2.500 2 9 10m0-10-9 10" stroke="#b4b5a9" strokeWidth="1.400" strokeLinecap="round" />
          </svg>
        </button>
      </div>
      <div className="grow border-t border-[#8d877e]" />
    </div>
  );
}

function TaskBar() {
  return (
    <footer className="flex h-[25px] shrink-0 items-center border-t border-white bg-[#edecea] pl-1 pr-[3px]">
      <span className="mr-1 h-[17px] w-1 bg-[radial-gradient(#8f8f8f_35%,transparent_60%)] bg-size-[3px_3px]" />
      <div className="flex min-w-0 grow gap-[2px] pr-4">
        {TASKS.map(([icon, title], i) => (
          <button
            key={title}
            type="button"
            className={
              i === TASKS.length - 1
                ? "flex h-[22px] w-[206px] min-w-0 items-center gap-2 rounded border border-[#8a8681] bg-linear-to-b from-[#b9b6b1] to-[#c9c6c1] px-[6px]"
                : "flex h-[22px] w-[206px] min-w-0 items-center gap-2 rounded border border-[#8f8c88] bg-linear-to-b from-white to-[#e8e6e3] px-[6px]"
            }
          >
            <Icon name={icon} />
            <span className="whitespace-nowrap">{title}</span>
          </button>
        ))}
      </div>
      <button type="button" aria-label="Workspace 1" className="flex h-[22px] w-[43px] items-center justify-center border border-t-2 border-[#b8c6dc] border-t-[#55719b] bg-[#d3e2f8]">
        <Icon name="waves" />
      </button>
      <button type="button" aria-label="Trash" className="ml-[13px] h-5 w-5">
        <svg viewBox="0 0 20 20" aria-hidden="true">
          <path d="M1 3h18l-1.500 15.500h-15z" fill="#2f69ad" stroke="#173f73" />
          <path d="M1 1h18v4H1z" fill="#6a9bd0" stroke="#173f73" />
          <path d="M3.500 7v10" stroke="#79a9dc" strokeWidth="2" />
        </svg>
      </button>
    </footer>
  );
}

export default function App() {
  return (
    <div className="relative flex min-h-screen flex-col overflow-hidden bg-[#eeebe7] font-['DejaVu_Sans','Noto_Sans',sans-serif] text-[13px] leading-5 text-[#111]">
      <DesktopPanel />
      <TitleBar />
      <MenuBar />
      <ToolBar />
      <Workspace />
      <DocumentTabs />
      <div className="flex grow items-start justify-end pt-[3px] pr-[2px]">
        <output className="border border-[#9d978e] border-r-white border-b-white px-[3px] py-[3px]">Sim Time: 1,000,000 ps</output>
      </div>
      <TaskBar />
      <svg viewBox="0 0 12 19" className="pointer-events-none absolute top-[566px] left-[970px] h-[19px] w-3" aria-hidden="true">
        <path d="M.7.8v15l3.600-3.200 2.500 5.600 2.300-1-2.500-5.400h4.700z" fill="#111" stroke="#fff" strokeWidth=".9" />
      </svg>
    </div>
  );
}
